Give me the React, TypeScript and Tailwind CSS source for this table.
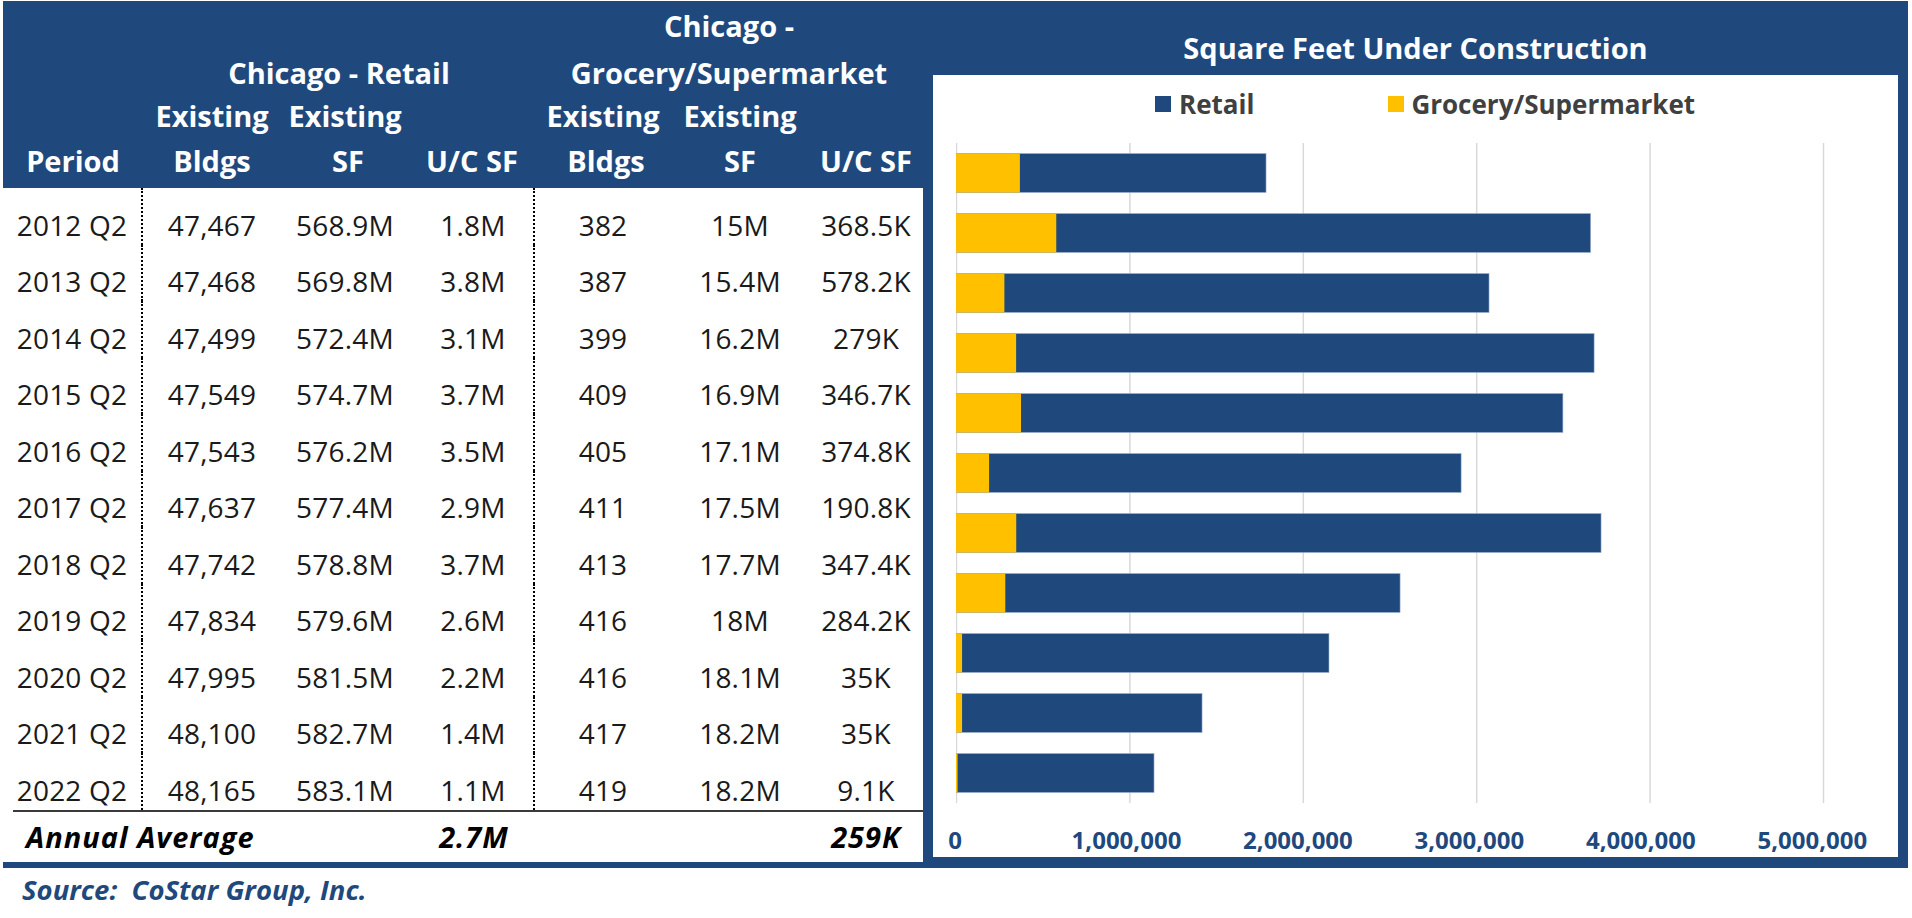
import React from "react";

const rows = [
  ["2012 Q2", "47,467", "568.9M", "1.8M", "382", "15M", "368.5K"],
  ["2013 Q2", "47,468", "569.8M", "3.8M", "387", "15.4M", "578.2K"],
  ["2014 Q2", "47,499", "572.4M", "3.1M", "399", "16.2M", "279K"],
  ["2015 Q2", "47,549", "574.7M", "3.7M", "409", "16.9M", "346.7K"],
  ["2016 Q2", "47,543", "576.2M", "3.5M", "405", "17.1M", "374.8K"],
  ["2017 Q2", "47,637", "577.4M", "2.9M", "411", "17.5M", "190.8K"],
  ["2018 Q2", "47,742", "578.8M", "3.7M", "413", "17.7M", "347.4K"],
  ["2019 Q2", "47,834", "579.6M", "2.6M", "416", "18M", "284.2K"],
  ["2020 Q2", "47,995", "581.5M", "2.2M", "416", "18.1M", "35K"],
  ["2021 Q2", "48,100", "582.7M", "1.4M", "417", "18.2M", "35K"],
  ["2022 Q2", "48,165", "583.1M", "1.1M", "419", "18.2M", "9.1K"],
];

const retail = [1.788, 3.66, 3.074, 3.68, 3.5, 2.913, 3.72, 2.561, 2.151, 1.419, 1.142];
const grocery = [0.3685, 0.5782, 0.279, 0.3467, 0.3748, 0.1908, 0.3474, 0.2842, 0.035, 0.035, 0.0091];
const PX = 173.4;

const grid = "grid grid-cols-[140px_138px_128px_126px_136px_138px_114px]";

function Chart() {
  return (
    <svg width="900" height="660" className="block">
      {[0, 1, 2, 3, 4, 5].map((i) => (
        <line key={i} x1={i * PX + 0.5} x2={i * PX + 0.5} y1={0} y2={660} stroke="#d9d9d9" strokeWidth={1.5} />
      ))}
      {retail.map((r, i) => (
        <g key={i}>
          <rect x={0} y={i * 60 + 10.5} width={r * PX} height={39} fill="#1f497d" stroke="#9fb3cf" strokeWidth={0.6} />
          <rect x={0} y={i * 60 + 10.5} width={Math.max(grocery[i] * PX, 1.5)} height={39} fill="#ffc000" />
        </g>
      ))}
    </svg>
  );
}

export default function App() {
  return (
    <div className="w-[1912px] h-[918px] bg-white font-['Open_Sans',sans-serif] overflow-hidden">
      <div className="ml-[3px] mt-[1px] w-[1905px] h-[867px] bg-[#1f497d] flex">
        {/* Table */}
        <div className="w-[920px] flex flex-col">
          <div className={`${grid} grid-rows-[48px_46px_40px_53px] h-[187px] text-white font-bold text-[29px] leading-none`}>
            <div className="col-span-4" />
            <div className="col-span-3 flex items-center justify-center">Chicago -</div>
            <div />
            <div className="col-span-3 flex items-center justify-center whitespace-nowrap">Chicago - Retail</div>
            <div className="col-span-3 flex items-center justify-center whitespace-nowrap">Grocery/Supermarket</div>
            <div />
            <div className="flex items-center justify-center">Existing</div>
            <div className="flex items-center justify-center">Existing</div>
            <div />
            <div className="flex items-center justify-center">Existing</div>
            <div className="flex items-center justify-center">Existing</div>
            <div />
            <div className="flex items-center justify-center pb-[3px]">Period</div>
            <div className="flex items-center justify-center pb-[3px]">Bldgs</div>
            <div className="flex items-center justify-center pb-[3px] pl-[6px]">SF</div>
            <div className="flex items-center justify-center pb-[3px]">U/C SF</div>
            <div className="flex items-center justify-center pb-[3px] pl-[6px]">Bldgs</div>
            <div className="flex items-center justify-center pb-[3px]">SF</div>
            <div className="flex items-center justify-center pb-[3px]">U/C SF</div>
          </div>
          <div className="h-[674px] bg-white flex flex-col text-[#1a1a1a] text-[28px] leading-[30px] tracking-[0.2px]">
            {rows.map((r) => (
              <div key={r[0]} className={`${grid} h-[56.5px]`}>
                <div className="flex items-end justify-center pb-[5px] border-r-2 border-dotted border-black">{r[0]}</div>
                <div className="flex items-end justify-center pb-[5px]">{r[1]}</div>
                <div className="flex items-end justify-center pb-[5px]">{r[2]}</div>
                <div className="flex items-end justify-center pb-[5px] pl-[4px] border-r-2 border-dotted border-black">{r[3]}</div>
                <div className="flex items-end justify-center pb-[5px]">{r[4]}</div>
                <div className="flex items-end justify-center pb-[5px] whitespace-nowrap">{r[5]}</div>
                <div className="flex items-end justify-center pb-[5px] whitespace-nowrap">{r[6]}</div>
              </div>
            ))}
            <div className="ml-[10px] h-[2px] bg-[#3a3a3a]" />
            <div className={`${grid} flex-1 font-bold italic text-black text-[29px] tracking-[1px]`}>
              <div className="col-span-3 flex items-center pl-[23px] whitespace-nowrap">Annual Average</div>
              <div className="flex items-center justify-center pl-[4px]">2.7M</div>
              <div className="col-span-2" />
              <div className="flex items-center justify-center">259K</div>
            </div>
          </div>
        </div>
        {/* Chart */}
        <div className="w-[985px] flex flex-col">
          <div className="h-[74px] flex items-center justify-center pt-[18px] text-white font-bold text-[29px] leading-none">
            Square Feet Under Construction
          </div>
          <div className="mx-[10px] h-[782px] bg-white flex flex-col">
            <div className="h-[58px] flex items-center pl-[222px] text-[26px] font-bold text-[#404040]">
              <div className="w-[16px] h-[16px] bg-[#1f497d]" />
              <span className="ml-[8px]">Retail</span>
              <div className="ml-[134px] w-[16px] h-[16px] bg-[#ffc000]" />
              <span className="ml-[7px]">Grocery/Supermarket</span>
            </div>
            <div className="mt-[10px] ml-[23px]">
              <Chart />
            </div>
            <div className="mt-[21px] ml-[-63.7px] flex text-[24px] leading-[32px] font-bold text-[#1f497d]">
              {["0", "1,000,000", "2,000,000", "3,000,000", "4,000,000", "5,000,000"].map((l) => (
                <div key={l} className="w-[173.4px] text-center">{l}</div>
              ))}
            </div>
          </div>
        </div>
      </div>
      <div className="mt-[8px] pl-[22px] text-[27.5px] leading-[28px] font-bold italic text-[#1f497d] whitespace-pre">
        Source:  CoStar Group, Inc.
      </div>
    </div>
  );
}
